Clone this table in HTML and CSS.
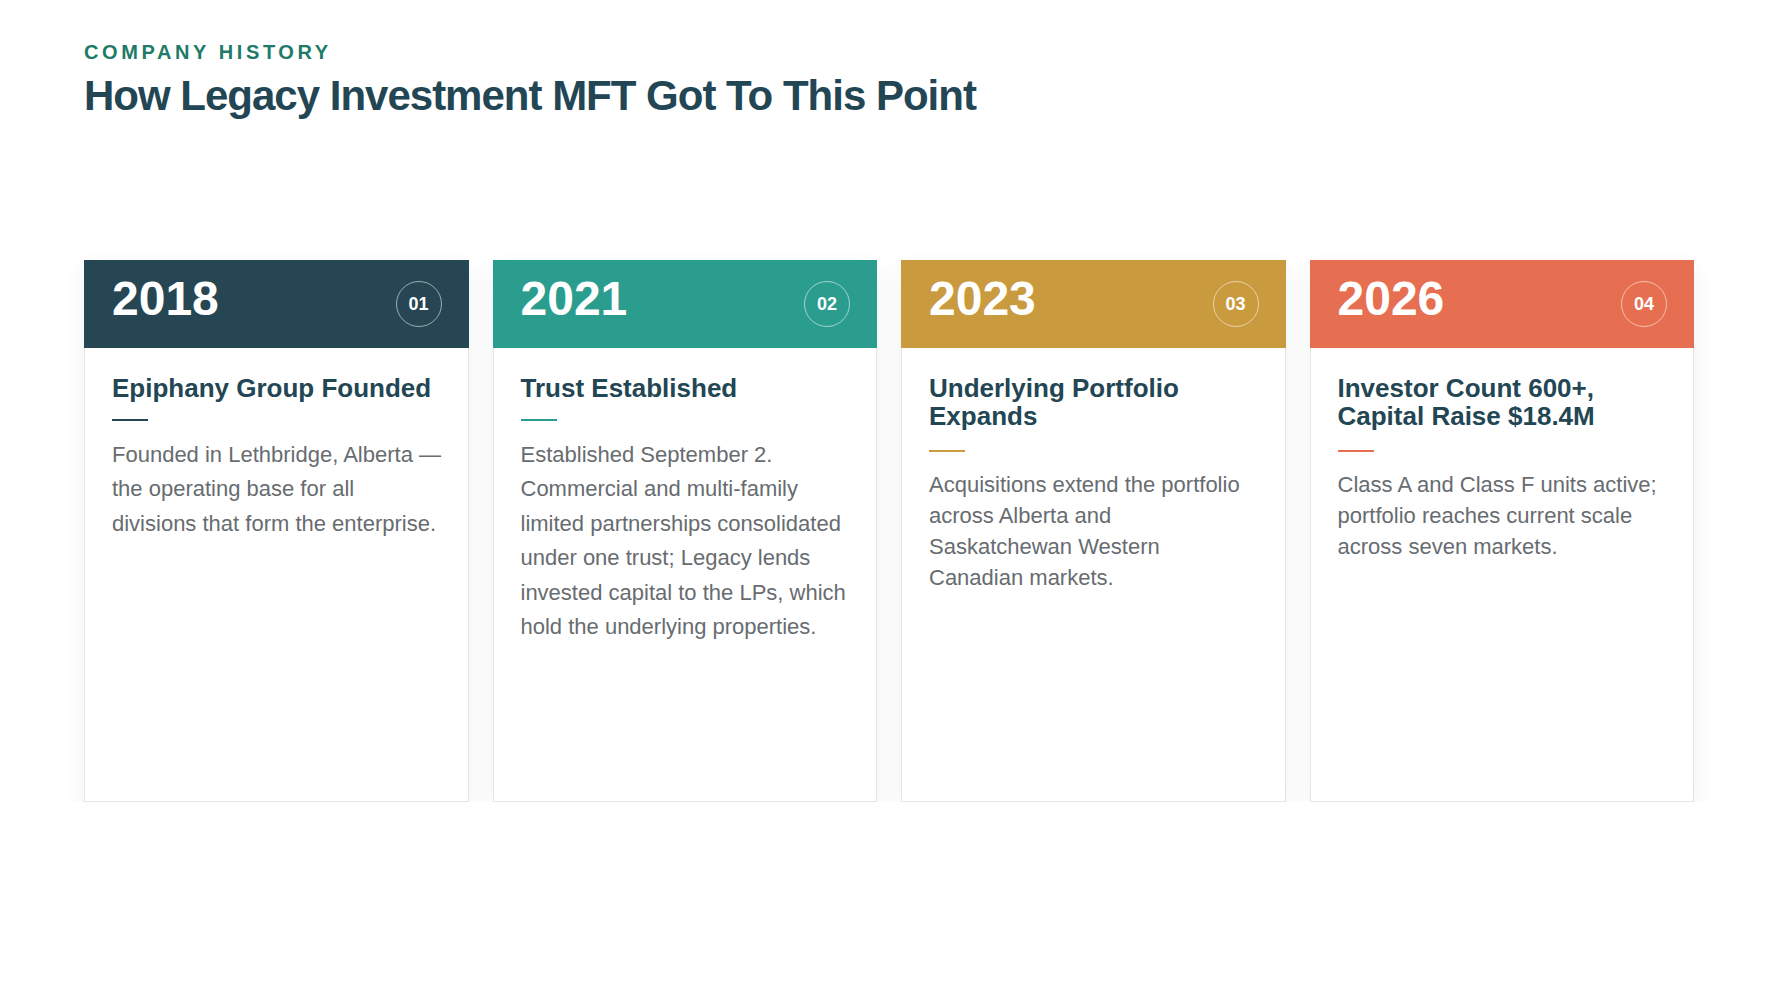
FILE: index.html
```html
<!DOCTYPE html>
<html lang="en">
<head>
<meta charset="utf-8">
<title>Company History</title>
<link rel="stylesheet" href="styles.css">
</head>
<body>
<main class="slide">
  <header class="intro">
    <p class="eyebrow">COMPANY HISTORY</p>
    <h1 class="headline">How Legacy Investment MFT Got To This Point</h1>
  </header>
  <section class="timeline">
    <article class="card card--navy">
      <div class="card-head">
        <span class="year">2018</span>
        <span class="num">01</span>
      </div>
      <div class="card-body">
        <h2 class="card-title">Epiphany Group Founded</h2>
        <div class="rule"></div>
        <p class="card-text">Founded in Lethbridge, Alberta — the operating base for all divisions that form the enterprise.</p>
      </div>
    </article>
    <article class="card card--teal">
      <div class="card-head">
        <span class="year">2021</span>
        <span class="num">02</span>
      </div>
      <div class="card-body">
        <h2 class="card-title">Trust Established</h2>
        <div class="rule"></div>
        <p class="card-text">Established September 2. Commercial and multi-family limited partnerships consolidated under one trust; Legacy lends invested capital to the LPs, which hold the underlying properties.</p>
      </div>
    </article>
    <article class="card card--gold card--long">
      <div class="card-head">
        <span class="year">2023</span>
        <span class="num">03</span>
      </div>
      <div class="card-body">
        <h2 class="card-title">Underlying Portfolio Expands</h2>
        <div class="rule"></div>
        <p class="card-text">Acquisitions extend the portfolio across Alberta and <span class="keep">Saskatchewan Western</span> <span class="keep">Canadian markets.</span></p>
      </div>
    </article>
    <article class="card card--coral card--long">
      <div class="card-head">
        <span class="year">2026</span>
        <span class="num">04</span>
      </div>
      <div class="card-body">
        <h2 class="card-title">Investor Count 600+, Capital Raise $18.4M</h2>
        <div class="rule"></div>
        <p class="card-text">Class A and Class F units active; portfolio reaches current scale across seven markets.</p>
      </div>
    </article>
  </section>
</main>
</body>
</html>
```

FILE: styles.css
```css
html, body {
  margin: 0;
  padding: 0;
  background: #ffffff;
}

body {
  font-family: "Liberation Sans", Arial, Helvetica, sans-serif;
}

.slide {
  padding: 40px 84px 0;
}

.eyebrow {
  margin: 0 0 7px;
  font-size: 20px;
  line-height: 24px;
  font-weight: 700;
  letter-spacing: 0.18em;
  color: #1f7a68;
}

.headline {
  margin: 0;
  font-size: 42px;
  line-height: 50px;
  font-weight: 700;
  letter-spacing: -1px;
  color: #234654;
}

.timeline {
  display: grid;
  grid-template-columns: repeat(4, 1fr);
  gap: 24px;
  margin-top: 139px;
}

.card {
  height: 542px;
  box-sizing: border-box;
  border: 1px solid #e8e6e1;
  background: #ffffff;
  box-shadow: 0 8px 22px rgba(30, 50, 60, 0.07);
  display: flex;
  flex-direction: column;
}

.card-head {
  height: 88px;
  margin: -1px -1px 0;
  padding: 0 27px 0 28px;
  box-sizing: border-box;
  display: flex;
  align-items: center;
  justify-content: space-between;
  color: #ffffff;
}

.year {
  font-size: 48px;
  line-height: 48px;
  font-weight: 700;
  padding-bottom: 10px;
}

.num {
  width: 46px;
  height: 46px;
  box-sizing: border-box;
  border: 1.5px solid rgba(255, 255, 255, 0.55);
  border-radius: 50%;
  display: flex;
  align-items: center;
  justify-content: center;
  font-size: 18px;
  font-weight: 700;
}

.card-body {
  padding: 27px 24px 0 27px;
}

.card-title {
  margin: 0;
  font-size: 26px;
  line-height: 1.06;
  font-weight: 700;
  color: #234654;
}

.rule {
  width: 36px;
  height: 2px;
  margin-top: 16px;
}

.card-text {
  margin: 17px 0 0;
  font-size: 22px;
  line-height: 1.57;
  color: #676c70;
}

.keep {
  white-space: nowrap;
}

.card--long .rule {
  margin-top: 20px;
}

.card--long .card-text {
  line-height: 31px;
}

.card--navy .card-head,
.card--navy .rule {
  background: #264653;
}

.card--teal .card-head,
.card--teal .rule {
  background: #2a9d8f;
}

.card--gold .card-head,
.card--gold .rule {
  background: #c99a3e;
}

.card--coral .card-head,
.card--coral .rule {
  background: #e76f51;
}
```
